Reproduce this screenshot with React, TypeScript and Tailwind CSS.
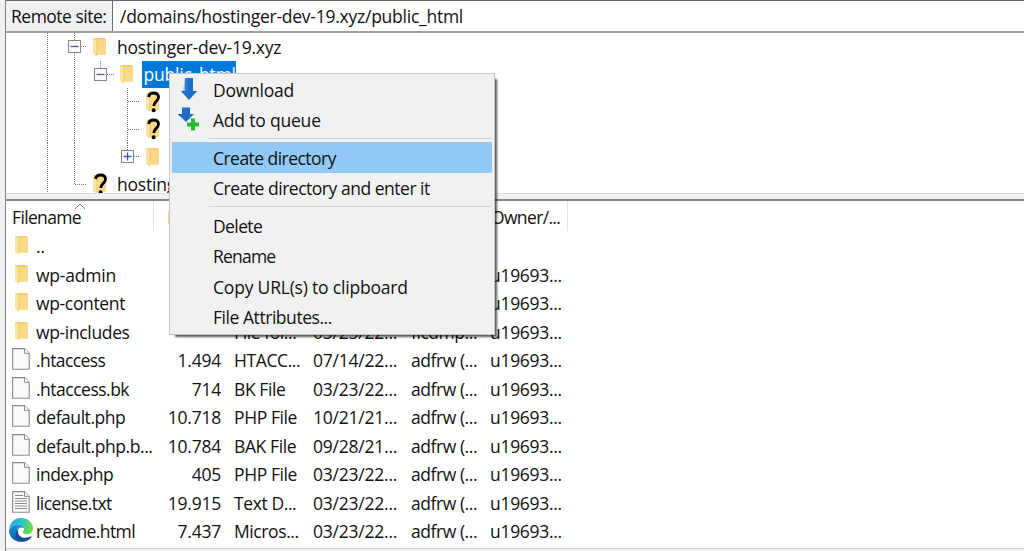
import clsx from "clsx";

type Guide = "blank" | "line" | "tee" | "end" | "minus" | "minusEnd" | "plus";

const tree: { guides: Guide[]; icon: "folder" | "unknown"; label?: string; selected?: boolean }[] = [
  { guides: ["line", "minus"], icon: "folder", label: "hostinger-dev-19.xyz" },
  { guides: ["line", "line", "minusEnd"], icon: "folder", label: "public_html", selected: true },
  { guides: ["line", "line", "blank", "tee"], icon: "unknown" },
  { guides: ["line", "line", "blank", "tee"], icon: "unknown" },
  { guides: ["line", "line", "blank", "plus"], icon: "folder" },
  { guides: ["line", "end"], icon: "unknown", label: "hostinger" },
];

const files = [
  { icon: "folder", name: "..", fit: "" },
  { icon: "folder", name: "wp-admin", fit: "tracking-[-0.2px]", owner: "u19693..." },
  { icon: "folder", name: "wp-content", fit: "tracking-[-0.35px]", owner: "u19693..." },
  { icon: "folder", name: "wp-includes", fit: "tracking-[-0.35px]", type: "File fol...", date: "03/23/22...", perms: "flcdmp...", owner: "u19693..." },
  { icon: "file", name: ".htaccess", fit: "tracking-[-0.6px]", size: "1.494", type: "HTACC...", date: "07/14/22...", perms: "adfrw (...", owner: "u19693..." },
  { icon: "file", name: ".htaccess.bk", fit: "tracking-[-0.5px]", size: "714", type: "BK File", date: "03/23/22...", perms: "adfrw (...", owner: "u19693..." },
  { icon: "file", name: "default.php", fit: "tracking-[-0.45px]", size: "10.718", type: "PHP File", date: "10/21/21...", perms: "adfrw (...", owner: "u19693..." },
  { icon: "file", name: "default.php.b...", fit: "tracking-[-0.43px]", size: "10.784", type: "BAK File", date: "09/28/21...", perms: "adfrw (...", owner: "u19693..." },
  { icon: "file", name: "index.php", fit: "tracking-[-0.5px]", size: "405", type: "PHP File", date: "03/23/22...", perms: "adfrw (...", owner: "u19693..." },
  { icon: "text", name: "license.txt", fit: "tracking-[-0.6px]", size: "19.915", type: "Text D...", date: "03/23/22...", perms: "adfrw (...", owner: "u19693..." },
  { icon: "edge", name: "readme.html", fit: "tracking-[-0.6px]", size: "7.437", type: "Micros...", date: "03/23/22...", perms: "adfrw (...", owner: "u19693..." },
];

const columns = "grid grid-cols-[148px_74px_79px_98px_79px_84px]";

function FolderIcon() {
  return (
    <svg width="15" height="20" viewBox="0 0 15 20" className="shrink-0">
      <path d="M1 1h11.5l1.5 1.2V17.5H4L1 16z" fill="#f3cd72" />
      <path d="M5 3h9v14.5H5z" fill="#f8d986" />
      <path d="M1 1l4 2.5v16L1 17z" fill="#fbe3a2" />
      <path d="M5 3.5v12l-1.2 3.5" stroke="#e8bd5c" strokeWidth=".7" fill="none" />
    </svg>
  );
}

function UnknownIcon() {
  return (
    <span className="relative flex h-[22px] w-[15px] items-center">
      <FolderIcon />
      <svg width="15" height="22" viewBox="0 0 15 22" className="absolute top-0 left-[1px]">
        <path d="M2.6 6C3 3 5 2 7.6 2c3 0 4.9 1.5 4.9 4.2 0 4-4.7 4.2-4.7 8.8" fill="none" stroke="#000" strokeWidth="2.8" />
        <circle cx="7.6" cy="19.3" r="2" fill="#000" />
      </svg>
    </span>
  );
}

function FileIcon({ lines = false }: { lines?: boolean }) {
  return (
    <svg width="18" height="22" viewBox="0 0 18 22" className="shrink-0">
      <path d="M.6.6h12l4.6 4.6v16H.6z" fill="#f8f9fa" stroke="#8a8a8a" strokeWidth="1.1" />
      <path d="M12.5.6v4.7h4.700" fill="#fff" stroke="#8a8a8a" />
      {lines && (
        <path d="M3 4.5h8M3 7.5h12M3 10h12M3 12.5h12M3 15h12M3 17.5h12" stroke="#8d8d8d" strokeWidth="1.1" />
      )}
    </svg>
  );
}

function EdgeIcon() {
  return (
    <svg width="24" height="24" viewBox="0 0 24 24" className="shrink-0">
      <defs>
        <linearGradient id="edge-top" x1="0" y1="0" x2="1" y2=".35">
          <stop offset="0" stopColor="#1c9de0" />
          <stop offset=".5" stopColor="#2cbfcf" />
          <stop offset="1" stopColor="#6adb4d" />
        </linearGradient>
        <linearGradient id="edge-left" x1="0" y1="0" x2="0" y2="1">
          <stop offset="0" stopColor="#1c93de" />
          <stop offset="1" stopColor="#0c59a4" />
        </linearGradient>
      </defs>
      <path d="M.3 10.5C1 4.2 5.6 0 12 0c7 0 12 4.7 12 10.2 0 3.7-2.7 6-6.2 6-2.5 0-4-.9-4-1.9 0-.8 1.2-1 1.2-3.100C15 8.3 12 6 8.5 6 5 6 1.7 7.7.3 10.5z" fill="url(#edge-top)" />
      <path d="M.2 11.5C1.5 8 5 6.2 8.5 6.2c3.3 0 5.7 1.6 6.3 4-3.2-1.7-6.9.4-6.9 4.5 0 4.2 3.4 8 8 8.3C8.7 26 .2 20.6 0 13z" fill="url(#edge-left)" />
      <path d="M9.4 11.2c-1.5 4.6 1.6 8.6 6.8 8.6 2.6 0 4.6-.8 5.6-1.5.6-.4 1 .1.7.6-1.6 2.5-4.1 4.2-6.9 4.6-5 .2-8.8-3-8.8-7.3 0-2.2 1-4 2.6-5z" fill="#174b91" />
    </svg>
  );
}

function GuideCell({ kind }: { kind: Guide }) {
  const boxed = kind === "minus" || kind === "minusEnd" || kind === "plus";
  const half = kind === "end" || kind === "minusEnd" || kind === "plus";
  return (
    <svg width="26.5" height="27.5" viewBox="0 0 26.5 27.5" className="shrink-0">
      {kind !== "blank" && <path d={half ? "M13.5 0V14" : "M13.5 0V28"} stroke="#777" strokeDasharray="1 1" />}
      {kind !== "blank" && kind !== "line" && (
        <path d="M14 13.5h13" stroke="#777" strokeDasharray="1 1" />
      )}
      {boxed && (
        <>
          <rect x="7.5" y="7.5" width="12" height="12" fill="#fafafa" stroke="#858585" />
          <path d={kind === "plus" ? "M9.5 13.5h8M13.5 9.5v8" : "M9.5 13.5h8"} stroke="#3c62a3" strokeWidth="1.3" />
        </>
      )}
    </svg>
  );
}

function DownloadIcon() {
  return (
    <svg width="18" height="24" viewBox="0 0 18 24" className="-translate-x-px">
      <path d="M5 1h8v13h4.200L9 23 .8 14H5z" fill="#1b6fc6" />
      <path d="M5 1h3v13H3z" fill="#3b8bd9" opacity=".5" />
    </svg>
  );
}

function QueueIcon() {
  return (
    <svg width="24" height="24" viewBox="0 0 24 24" className="-translate-x-[2px] -translate-y-px">
      <path d="M6 .5h8v6.500h4L10 15 1.500 7H6z" fill="#1b6fc6" />
      <path d="M15 11.500h4v4h4v4h-4v4h-4v-4h-4v-4h4z" fill="#22bd32" />
    </svg>
  );
}

function MenuItem({ label, fit, icon, active }: { label: string; fit: string; icon?: React.ReactNode; active?: boolean }) {
  return (
    <div className={clsx("mr-[2px] ml-px flex h-[30.5px] items-center", active && "bg-[#91c9f7]")}>
      <span className="flex w-[41px] shrink-0 items-center justify-center pr-[6px]">{icon}</span>
      <span className={clsx("pt-px", fit)}>{label}</span>
    </div>
  );
}

function MenuSeparator() {
  return (
    <div className="flex h-[7px] items-center pr-[3px] pl-[38px]">
      <div className="h-px w-full bg-[#d2d2d2]" />
    </div>
  );
}

function ContextMenu() {
  return (
    <div className="absolute top-[73px] left-[169px] h-[262px] w-[326px] border border-[#c6c6c6] bg-[#f1f1f1] pl-px shadow-[4px_4px_2px_-2px_rgba(0,0,0,0.65)]">
      <MenuItem label="Download" fit="tracking-[-0.25px]" icon={<DownloadIcon />} />
      <MenuItem label="Add to queue" fit="tracking-[-0.2px]" icon={<QueueIcon />} />
      <MenuSeparator />
      <MenuItem label="Create directory" fit="tracking-[-0.54px]" active />
      <MenuItem label="Create directory and enter it" fit="tracking-[-0.48px]" />
      <MenuSeparator />
      <MenuItem label="Delete" fit="tracking-[-0.6px]" />
      <MenuItem label="Rename" fit="tracking-[-0.8px]" />
      <MenuItem label="Copy URL(s) to clipboard" fit="tracking-[-0.2px]" />
      <MenuItem label="File Attributes..." fit="tracking-[-0.45px]" />
    </div>
  );
}

function RemoteTree() {
  return (
    <div className="h-[160px] overflow-hidden bg-white pl-[28px]">
      {tree.map((node, i) => (
        <div key={i} className="flex h-[27.5px] items-center">
          {node.guides.map((kind, j) => (
            <GuideCell key={j} kind={kind} />
          ))}
          <span className="flex w-[27px] shrink-0 justify-center pr-[2px]">
            {node.icon === "folder" ? <FolderIcon /> : <UnknownIcon />}
          </span>
          {node.label && (
            <span className={clsx("ml-px flex h-full items-center px-[2px]", node.selected && "w-[94px] bg-[#0078d7] text-white")}>
              {node.label}
            </span>
          )}
        </div>
      ))}
    </div>
  );
}

function FileList() {
  return (
    <div className="h-[349px] overflow-hidden border-t-2 border-[#858585] bg-white">
      <div className={clsx(columns, "h-[31px]")}>
        <div className="relative h-[30px] border-r border-[#e2e2e2] pt-[4px] pl-[6px] tracking-[-0.65px]">
          Filename
          <svg width="12" height="7" viewBox="0 0 12 7" className="absolute top-[2px] left-[68px]">
            <path d="M1 6l5-5 5 5" fill="none" stroke="#777" />
          </svg>
        </div>
        <div className="pt-[4px] pl-[13px] text-[#e38a50]">Filesize</div>
        <div className="col-start-6 h-[30px] border-r border-[#e2e2e2] pt-[4px] pl-[7px] tracking-[-0.65px]">Owner/...</div>
      </div>
      {files.map((file) => (
        <div key={file.name} className={clsx(columns, "h-[28.5px] items-center")}>
          <div className="flex items-center">
            <span className="flex h-[28px] w-[30px] shrink-0 items-center justify-center pb-[2px]">
              {file.icon === "folder" && <FolderIcon />}
              {file.icon === "file" && <FileIcon />}
              {file.icon === "text" && <FileIcon lines />}
              {file.icon === "edge" && <EdgeIcon />}
            </span>
            <span className={file.fit}>{file.name}</span>
          </div>
          <span className="pr-[7px] text-right">{file.size}</span>
          <span className="pl-[6px] tracking-[-0.4px]">{file.type}</span>
          <span className="pl-[6px]">{file.date}</span>
          <span className="pl-[6px] tracking-[-0.45px]">{file.perms}</span>
          <span className="pl-[6px] tracking-[-0.3px]">{file.owner}</span>
        </div>
      ))}
    </div>
  );
}

export default function App() {
  return (
    <div className="relative h-[551px] w-[1024px] overflow-hidden bg-[#f0f0f0] pl-[5px] font-['Open_Sans',sans-serif] text-[17.5px] leading-[24px] tracking-[-0.22px] whitespace-nowrap text-[#111]">
      <div className="border-l border-[#808080]">
        <div className="flex h-[33px] items-center border-t border-b-2 border-t-[#666] border-b-[#a0a0a0] bg-white">
          <div className="flex h-full w-[107px] items-center border-r border-[#707070] bg-[#f0f0f0] pl-[5px] tracking-[-0.5px]">Remote site:</div>
          <div className="pl-[7px] tracking-[-0.25px]">/domains/hostinger-dev-19.xyz/public_html</div>
        </div>
        <RemoteTree />
        <div className="h-[6px] border-t border-[#dedede] bg-[#f0f0f0]" />
        <FileList />
        <div className="h-[3px] border-t border-[#d0d0d0] bg-[#f0f0f0]" />
      </div>
      <ContextMenu />
    </div>
  );
}
